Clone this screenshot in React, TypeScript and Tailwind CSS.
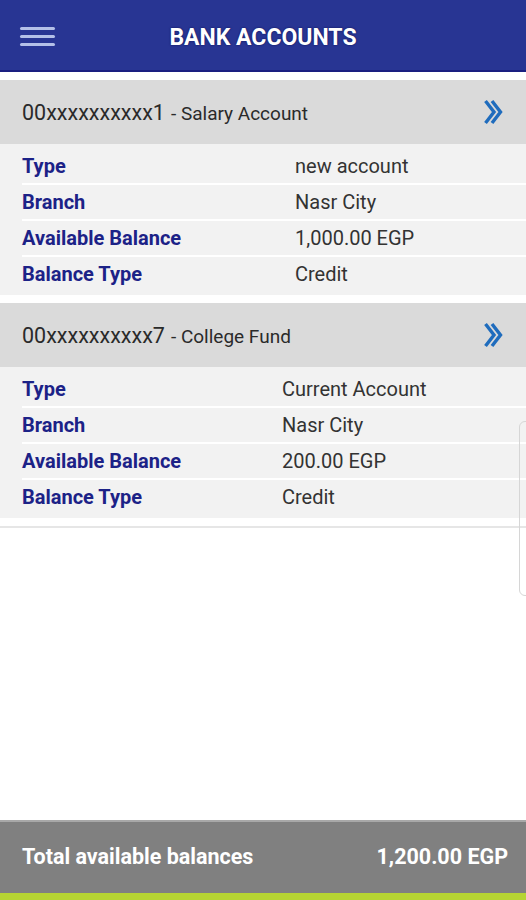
import React from "react";

type Account = {
  number: string;
  name: string;
  valueCol: string;
  rows: { label: string; value: string }[];
};

const accounts: Account[] = [
  {
    number: "00xxxxxxxxxx1",
    name: "Salary Account",
    valueCol: "grid-cols-[273px_1fr]",
    rows: [
      { label: "Type", value: "new account" },
      { label: "Branch", value: "Nasr City" },
      { label: "Available Balance", value: "1,000.00 EGP" },
      { label: "Balance Type", value: "Credit" },
    ],
  },
  {
    number: "00xxxxxxxxxx7",
    name: "College Fund",
    valueCol: "grid-cols-[260px_1fr]",
    rows: [
      { label: "Type", value: "Current Account" },
      { label: "Branch", value: "Nasr City" },
      { label: "Available Balance", value: "200.00 EGP" },
      { label: "Balance Type", value: "Credit" },
    ],
  },
];

const DoubleChevron = () => (
  <svg width="20" height="26" viewBox="0 0 20 26" fill="none">
    <polyline points="2.5,2 11,13 2.5,24" stroke="#1f6cbd" strokeWidth="3.4" strokeLinejoin="miter" />
    <polyline points="9,2 17.5,13 9,24" stroke="#1f6cbd" strokeWidth="3.4" strokeLinejoin="miter" />
  </svg>
);

const AccountCard = ({ account }: { account: Account }) => (
  <div className="mt-2">
    <div className="h-16 bg-[#dadada] flex items-center justify-between pl-[22px] pr-[23px]">
      <div className="flex items-baseline text-[#2a2a2a] pt-[3px]">
        <span className="text-[21.5px]">{account.number}</span>
        <span className="text-[19px] ml-[6px]">- {account.name}</span>
      </div>
      <DoubleChevron />
    </div>
    <div className="bg-[#f2f2f2] pt-[5px] pb-[4px]">
      {account.rows.map((row, i) => (
        <div key={row.label} className={i > 0 ? "ml-[22px] border-t-2 border-white" : "ml-[22px]"}>
          <div className={`grid ${account.valueCol} h-[34px] items-center`}>
            <span className="text-[20px] font-bold text-[#1c2287]">{row.label}</span>
            <span className="text-[20px] text-[#333333]">{row.value}</span>
          </div>
        </div>
      ))}
    </div>
  </div>
);

export default function App() {
  return (
    <div className="relative w-[526px] h-[900px] bg-white flex flex-col overflow-hidden font-['Roboto',sans-serif]">
      {/* Header */}
      <header className="h-[72px] bg-[#283593] border-b-2 border-[#1a1f80] flex items-center relative">
        <div className="absolute left-[20px] top-[27px] flex flex-col gap-[5px]">
          <span className="block w-[35px] h-[3px] bg-[#b4c0e8] rounded-sm" />
          <span className="block w-[35px] h-[3px] bg-[#b4c0e8] rounded-sm" />
          <span className="block w-[35px] h-[3px] bg-[#b4c0e8] rounded-sm" />
        </div>
        <h1 className="w-full text-center text-white font-bold text-[23px] pt-[6px] [text-shadow:0_0_2px_#0a0f50]">
          BANK ACCOUNTS
        </h1>
      </header>

      {/* Accounts */}
      <main className="flex-1">
        <div className="border-b-2 border-[#e6e6e6] pb-2">
          {accounts.map(a => (
            <AccountCard key={a.number} account={a} />
          ))}
        </div>
      </main>

      {/* Footer */}
      <footer className="h-[73px] bg-[#808080] border-t-2 border-[#a8a8a8] flex items-center justify-between pl-[22px] pr-[18px] text-white font-bold text-[21.5px]">
        <span>Total available balances</span>
        <span>1,200.00 EGP</span>
      </footer>
      <div className="h-[7px] bg-[#b6d433]" />

      {/* scroll indicator */}
      <div className="absolute right-[-6px] top-[421px] w-[13px] h-[175px] border border-[#d6d6d6] rounded-md" />
    </div>
  );
}
